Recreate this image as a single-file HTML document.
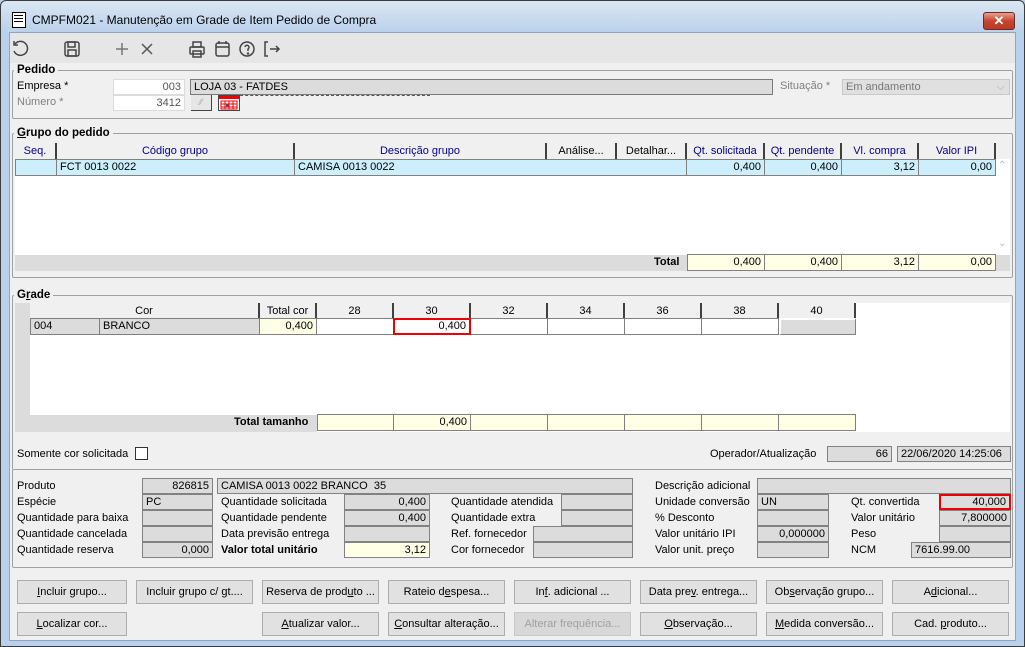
<!DOCTYPE html>
<html><head><meta charset="utf-8"><style>
*{box-sizing:border-box;margin:0;padding:0}
body{width:1025px;height:647px;overflow:hidden;background:#b9d1ea;font-family:"Liberation Sans",sans-serif;font-size:11px;color:#000;position:relative}
.a{position:absolute;white-space:nowrap}
.f{position:absolute;background:#dcdcdc;border:1px solid #828282;height:16px;line-height:14px;padding:0 3px;overflow:hidden;white-space:nowrap}
.r{text-align:right}
.y{background:#ffffe6}
.w{background:#fff}
.grp{position:absolute;border:1px solid #a0a0a0;border-radius:2px}
.gl{position:absolute;background:#f0f0f0;font-weight:bold;font-size:11.5px;padding:0 3px;line-height:13px}
.h{position:absolute;background:#f0f0f0;border-right:2px solid #404040;height:16px;line-height:16px;text-align:center;color:#00008b}
.h2{color:#000}
.c{position:absolute;height:17px;line-height:15px;border:1px solid #808080;border-left:none;padding:0 3px;overflow:hidden}
.b{position:absolute;height:24px;line-height:22px;text-align:center;background:#e1e1e1;border:1px solid #adadad}
.b.dis{color:#a0a0a0;background:#d8d8d8;border-color:#c8c8c8}
u{text-decoration:underline}
</style></head><body>
<div class="a" style="left:0;top:0;width:1025px;height:647px;border:1px solid #3c3c3c;border-radius:6px 6px 0 0;background:linear-gradient(#dbe6f3,#b9d1ea 32px)"></div>
<div class="a" style="left:12px;top:12px;width:14px;height:16px;background:#fff;border:1px solid #000"></div>
<div class="a" style="left:14px;top:15px;width:9px;height:9px;background:repeating-linear-gradient(#000 0 1px,transparent 1px 3px)"></div>
<div class="a" style="left:32px;top:13px;font-size:12px">CMPFM021 - Manutenção em Grade de Item Pedido de Compra</div>
<div class="a" style="left:983px;top:12px;width:32px;height:18px;border:1px solid #6b2b22;border-radius:3px;background:linear-gradient(#e8a090,#c7442e 50%,#b83a25);color:#fff;font-weight:bold;text-align:center;line-height:16px;font-size:13px">✕</div>
<div class="a" style="left:9px;top:32px;width:1007px;height:609px;background:#f0f0f0;border:1px solid #8ea6c0"></div>
<div class="a" style="left:10px;top:33px;width:1005px;height:30px;background:#e6e6e6"></div>
<svg class="a" style="left:10px;top:38px" width="280" height="22" viewBox="0 0 280 22" fill="none" stroke="#444" stroke-width="1.5">
<path d="M5 6a7 7 0 1 1 -1 7"/><path d="M4 3v4h4"/>
<rect x="55" y="4" width="14" height="14" rx="2"/><rect x="58" y="4" width="7" height="5"/><rect x="58" y="12" width="8" height="6"/>
<path d="M112 5v12M106 11h12" stroke="#777"/><path d="M132 6l10 10M142 6l-10 10" stroke="#555"/>
<rect x="180" y="9" width="14" height="7" rx="1"/><rect x="183" y="4" width="8" height="5"/><rect x="183" y="13" width="8" height="6"/>
<rect x="206" y="5" width="13" height="13" rx="2"/><path d="M206 9h13M209 3v3M216 3v3"/>
<circle cx="237" cy="11" r="7"/><path d="M235 9a2 2 0 1 1 3 2v2" /><circle cx="238" cy="15.5" r=".5"/>
<path d="M258 4h-3v14h3M260 11h9M266 8l3 3-3 3"/>
</svg>
<div class="grp" style="left:12px;top:70px;width:1001px;height:49px"></div>
<div class="gl" style="left:14px;top:64px">Pedido</div>
<div class="a" style="left:17px;top:80px">Empresa *</div>
<div class="a" style="left:17px;top:96px;color:#808080">Número *</div>
<div class="f r w" style="left:113px;top:79px;width:72px;border-color:#dcdcdc;color:#555">003</div>
<div class="f r w" style="left:113px;top:95px;width:72px;border-color:#dcdcdc;color:#555">3412</div>
<div class="f" style="left:190px;top:79px;width:583px;border-color:#7a7a7a">LOJA 03 - FATDES</div>
<div class="a" style="left:230px;top:95px;width:200px;border-top:1px dashed #555"></div>
<div class="a" style="left:191px;top:95px;width:21px;height:16px;background:#e6e6e6;border-right:1px solid #444;border-bottom:1px solid #444;color:#aaa;font-size:9px;text-align:center;line-height:14px">⁄⁄</div>
<svg class="a" style="left:218px;top:95px" width="22" height="16" viewBox="0 0 22 16">
<rect x="0.5" y="0.5" width="21" height="15" fill="#fff" stroke="#444"/>
<rect x="1" y="1" width="20" height="3" fill="#e00"/>
<path d="M3 6h16v8H3zM3 9h16M3 12h16M7 6v8M11 6v8M15 6v8" fill="none" stroke="#e00" stroke-width="1"/>
<rect x="8" y="9.5" width="2.5" height="2" fill="#1a5fd0"/>
</svg>
<div class="a" style="left:780px;top:80px;color:#808080">Situação *</div>
<div class="f" style="left:842px;top:79px;width:168px;background:#e0e0e0;border-color:#c8c8c8;color:#777">Em andamento<span style="position:absolute;right:4px;color:#aaa">⌵</span></div>

<div class="grp" style="left:12px;top:133px;width:1001px;height:145px"></div>
<div class="gl" style="left:14px;top:127px"><u>G</u>rupo do pedido</div>
<div class="a" style="left:15px;top:143px;width:995px;height:128px;background:#fff"></div>
<div class="a" style="left:15px;top:143px;width:995px;height:16px;background:#f0f0f0"></div>
<div class="h" style="left:15px;top:143px;width:42px">Seq.</div>
<div class="h" style="left:57px;top:143px;width:238px">Código grupo</div>
<div class="h" style="left:295px;top:143px;width:252px">Descrição grupo</div>
<div class="h h2" style="left:547px;top:143px;width:70px">Análise...</div>
<div class="h h2" style="left:617px;top:143px;width:70px">Detalhar...</div>
<div class="h" style="left:687px;top:143px;width:78px">Qt. solicitada</div>
<div class="h" style="left:765px;top:143px;width:77px">Qt. pendente</div>
<div class="h" style="left:842px;top:143px;width:77px">Vl. compra</div>
<div class="h" style="left:919px;top:143px;width:77px">Valor IPI</div>
<div class="a" style="left:15px;top:159px;width:981px;height:17px;background:#cdeffc;border:1px solid #808080"></div>
<div class="c" style="left:15px;top:159px;width:42px;border-left:1px solid #808080"></div>
<div class="c" style="left:57px;top:159px;width:238px">FCT 0013 0022</div>
<div class="c" style="left:295px;top:159px;width:392px">CAMISA 0013 0022</div>
<div class="c r" style="left:687px;top:159px;width:78px">0,400</div>
<div class="c r" style="left:765px;top:159px;width:77px">0,400</div>
<div class="c r" style="left:842px;top:159px;width:77px">3,12</div>
<div class="c r" style="left:919px;top:159px;width:77px">0,00</div>
<div class="a" style="left:998px;top:160px;color:#bbb;font-size:10px">⌃</div>
<div class="a" style="left:998px;top:238px;color:#bbb;font-size:10px">⌄</div>
<div class="a" style="left:15px;top:255px;width:995px;height:16px;background:#dcdcdc"></div>
<div class="a" style="left:654px;top:256px;font-weight:bold">Total</div>
<div class="c r y" style="left:687px;top:254px;width:78px;border-left:1px solid #808080">0,400</div>
<div class="c r y" style="left:765px;top:254px;width:77px">0,400</div>
<div class="c r y" style="left:842px;top:254px;width:77px">3,12</div>
<div class="c r y" style="left:919px;top:254px;width:77px">0,00</div>

<div class="grp" style="left:12px;top:295px;width:1001px;height:175px;border-bottom:none"></div>
<div class="gl" style="left:14px;top:289px">G<u>r</u>ade</div>
<div class="a" style="left:15px;top:303px;width:995px;height:129px;background:#fff"></div>
<div class="a" style="left:15px;top:303px;width:15px;height:129px;background:#dcdcdc"></div>
<div class="a" style="left:15px;top:415px;width:302px;height:17px;background:#dcdcdc"></div>
<div class="a" style="left:30px;top:303px;width:826px;height:16px;background:#f0f0f0"></div>
<div class="h h2" style="left:30px;top:303px;width:230px">Cor</div>
<div class="h h2" style="left:260px;top:303px;width:57px">Total cor</div>
<div class="h h2" style="left:317px;top:303px;width:77px">28</div>
<div class="h h2" style="left:394px;top:303px;width:77px">30</div>
<div class="h h2" style="left:471px;top:303px;width:77px">32</div>
<div class="h h2" style="left:548px;top:303px;width:77px">34</div>
<div class="h h2" style="left:625px;top:303px;width:77px">36</div>
<div class="h h2" style="left:702px;top:303px;width:77px">38</div>
<div class="h h2" style="left:779px;top:303px;width:77px">40</div>
<div class="c" style="left:30px;top:318px;width:70px;border-left:1px solid #808080;background:#dcdcdc">004</div>
<div class="c" style="left:100px;top:318px;width:160px;background:#dcdcdc">BRANCO</div>
<div class="c r y" style="left:260px;top:318px;width:57px">0,400</div>
<div class="c w" style="left:317px;top:318px;width:77px"></div>
<div class="c r" style="left:393px;top:318px;width:78px;border:2px solid #e00;background:#fff;line-height:13px">0,400</div>
<div class="c w" style="left:471px;top:318px;width:77px"></div>
<div class="c w" style="left:548px;top:318px;width:77px"></div>
<div class="c w" style="left:625px;top:318px;width:77px"></div>
<div class="c w" style="left:702px;top:318px;width:77px"></div>
<div class="c" style="left:779px;top:318px;width:77px;background:#dcdcdc;border:2px solid #fff;border-right:1px solid #808080;border-bottom:1px solid #808080"></div>
<div class="a" style="left:234px;top:416px;font-weight:bold">Total tamanho</div>
<div class="c y" style="left:317px;top:414px;width:77px;border-left:1px solid #808080"></div>
<div class="c r y" style="left:394px;top:414px;width:77px">0,400</div>
<div class="c y" style="left:471px;top:414px;width:77px"></div>
<div class="c y" style="left:548px;top:414px;width:77px"></div>
<div class="c y" style="left:625px;top:414px;width:77px"></div>
<div class="c y" style="left:702px;top:414px;width:77px"></div>
<div class="c y" style="left:779px;top:414px;width:77px"></div>
<div class="a" style="left:17px;top:448px">Somente cor solicitada</div>
<div class="a" style="left:135px;top:447px;width:13px;height:13px;border:1px solid #333;background:#fff"></div>
<div class="a" style="left:710px;top:448px">Operador/Atualização</div>
<div class="f r" style="left:827px;top:446px;width:65px">66</div>
<div class="f" style="left:897px;top:446px;width:114px">22/06/2020 14:25:06</div>

<div class="grp" style="left:12px;top:469px;width:1001px;height:99px"></div>
<div class="a" style="left:17px;top:480px">Produto</div>
<div class="a" style="left:17px;top:496px">Espécie</div>
<div class="a" style="left:17px;top:512px">Quantidade para baixa</div>
<div class="a" style="left:17px;top:528px">Quantidade cancelada</div>
<div class="a" style="left:17px;top:544px">Quantidade reserva</div>
<div class="f r" style="left:142px;top:478px;width:71px">826815</div>
<div class="f" style="left:142px;top:494px;width:71px">PC</div>
<div class="f" style="left:142px;top:510px;width:71px"></div>
<div class="f" style="left:142px;top:526px;width:71px"></div>
<div class="f r" style="left:142px;top:542px;width:71px">0,000</div>
<div class="f" style="left:217px;top:478px;width:416px">CAMISA 0013 0022 BRANCO&nbsp; 35</div>
<div class="a" style="left:221px;top:496px">Quantidade solicitada</div>
<div class="a" style="left:221px;top:512px">Quantidade pendente</div>
<div class="a" style="left:221px;top:528px">Data previsão entrega</div>
<div class="a" style="left:221px;top:544px;font-weight:bold">Valor total unitário</div>
<div class="f r" style="left:344px;top:494px;width:86px">0,400</div>
<div class="f r" style="left:344px;top:510px;width:86px">0,400</div>
<div class="f" style="left:344px;top:526px;width:86px"></div>
<div class="f r y" style="left:344px;top:542px;width:86px">3,12</div>
<div class="a" style="left:451px;top:496px">Quantidade atendida</div>
<div class="a" style="left:451px;top:512px">Quantidade extra</div>
<div class="a" style="left:451px;top:528px">Ref. fornecedor</div>
<div class="a" style="left:451px;top:544px">Cor fornecedor</div>
<div class="f" style="left:561px;top:494px;width:72px"></div>
<div class="f" style="left:561px;top:510px;width:72px"></div>
<div class="f" style="left:533px;top:526px;width:100px"></div>
<div class="f" style="left:533px;top:542px;width:100px"></div>
<div class="a" style="left:655px;top:480px">Descrição adicional</div>
<div class="a" style="left:655px;top:496px">Unidade conversão</div>
<div class="a" style="left:655px;top:512px">% Desconto</div>
<div class="a" style="left:655px;top:528px">Valor unitário IPI</div>
<div class="a" style="left:655px;top:544px">Valor unit. preço</div>
<div class="f" style="left:757px;top:478px;width:254px"></div>
<div class="f" style="left:757px;top:494px;width:72px">UN</div>
<div class="f" style="left:757px;top:510px;width:72px"></div>
<div class="f r" style="left:757px;top:526px;width:72px">0,000000</div>
<div class="f" style="left:757px;top:542px;width:72px"></div>
<div class="a" style="left:851px;top:496px">Qt. convertida</div>
<div class="a" style="left:851px;top:512px">Valor unitário</div>
<div class="a" style="left:851px;top:528px">Peso</div>
<div class="a" style="left:851px;top:544px">NCM</div>
<div class="f r" style="left:939px;top:494px;width:72px;border:2px solid #e00;line-height:12px">40,000</div>
<div class="f r" style="left:939px;top:510px;width:72px">7,800000</div>
<div class="f" style="left:939px;top:526px;width:72px"></div>
<div class="f" style="left:911px;top:542px;width:100px">7616.99.00</div>

<div class="b" style="left:17px;top:580px;width:110px"><u>I</u>ncluir grupo...</div>
<div class="b" style="left:136px;top:580px;width:117px">Incluir grupo c/ <u>g</u>t....</div>
<div class="b" style="left:262px;top:580px;width:117px">Reserva de prod<u>u</u>to ...</div>
<div class="b" style="left:388px;top:580px;width:117px">Rateio d<u>e</u>spesa...</div>
<div class="b" style="left:514px;top:580px;width:117px">In<u>f</u>. adicional ...</div>
<div class="b" style="left:640px;top:580px;width:117px">Data pre<u>v</u>. entrega...</div>
<div class="b" style="left:766px;top:580px;width:117px">Ob<u>s</u>ervação grupo...</div>
<div class="b" style="left:892px;top:580px;width:117px">A<u>d</u>icional...</div>
<div class="b" style="left:17px;top:612px;width:110px"><u>L</u>ocalizar cor...</div>
<div class="b" style="left:262px;top:612px;width:117px"><u>A</u>tualizar valor...</div>
<div class="b" style="left:388px;top:612px;width:117px"><u>C</u>onsultar alteração...</div>
<div class="b dis" style="left:514px;top:612px;width:117px">Alterar frequência...</div>
<div class="b" style="left:640px;top:612px;width:117px"><u>O</u>bservação...</div>
<div class="b" style="left:766px;top:612px;width:117px"><u>M</u>edida conversão...</div>
<div class="b" style="left:892px;top:612px;width:117px">Cad. <u>p</u>roduto...</div>
</body></html>
